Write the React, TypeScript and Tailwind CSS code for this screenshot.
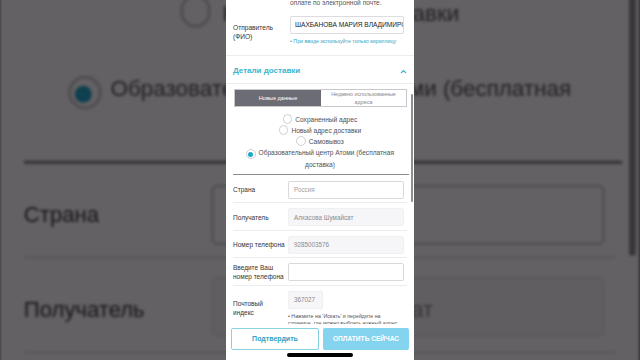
import React from 'react'

function Radio({ checked }: { checked?: boolean }) {
  return (
    <span className="mr-[3px] inline-flex h-[9.5px] w-[9.5px] items-center justify-center rounded-full border border-[#cfcfd3] bg-white align-[-2px]">
      {checked && <span className="h-[5px] w-[5px] rounded-full bg-[#1ea7c9]" />}
    </span>
  )
}

function Field({ label, value, muted }: { label: React.ReactNode; value?: string; muted?: boolean }) {
  return (
    <div className="mx-[7px] flex items-center border-b border-[#ececef] pt-[5px] pb-[3.5px] first:pt-[6px]">
      <div className="w-[55px] whitespace-nowrap text-[6.5px] leading-[9px] text-[#333]">{label}</div>
      <div
        className={
          muted
            ? 'flex h-[18px] w-[116px] items-center rounded-[2px] border border-[#f0f0f2] bg-[#f6f6f8] px-[5px] text-[6.3px] text-[#8a8a8e]'
            : 'flex h-[18px] w-[116px] items-center rounded-[2px] border border-[#d9d9dd] bg-white px-[5px] text-[6.3px] text-[#a0a0a4]'
        }
      >
        {value}
      </div>
    </div>
  )
}

function Screen() {
  return (
    <div className="relative w-[188px] bg-white text-[#333]">
      {/* ---------- cut-off paragraph ---------- */}
      <div className="h-[14px] pl-[64px] text-[6.6px] leading-[6px] text-[#555]">оплате по электронной почте.</div>

      {/* ---------- sender ---------- */}
      <div className="flex h-[41px]">
        <div className="w-[64px] pl-[7px] pt-[9px] text-[6.6px] leading-[9px]">
          Отправитель
          <br />
          (ФИО)
        </div>
        <div className="min-w-0 flex-1 pr-[10px]">
          <div className="mt-[2px] flex h-[18px] items-center overflow-hidden whitespace-nowrap rounded-[2px] border border-[#dcdce0] px-[4px] text-[6.6px] text-[#222]">
            ШАХБАНОВА МАРИЯ ВЛАДИМИРОВНА
          </div>
          <div className="mt-[4px] whitespace-nowrap text-[5.3px] leading-[7px] text-[#2aa7c7]">
            • При вводе используйте только кириллицу
          </div>
        </div>
      </div>

      {/* ---------- section header ---------- */}
      <div className="flex h-[29px] items-center justify-between border-y border-[#ececef] pl-[7px] pr-[7px] pt-[3px]">
        <span className="text-[8px] font-bold text-[#3db3cc]">Детали доставки</span>
        <svg width="7" height="5" viewBox="0 0 7 5" fill="none">
          <path d="M1 4 L3.5 1.5 L6 4" stroke="#3db3cc" strokeWidth="1.2" />
        </svg>
      </div>

      {/* ---------- tabs ---------- */}
      <div className="mt-[5px] ml-[8px] mr-[7px] flex h-[18px] border border-[#c8c8cc]">
        <div className="flex w-[86px] items-center justify-center bg-[#6c6c74] text-[5.6px] text-white">Новые данные</div>
        <div className="flex flex-1 items-center justify-center text-center text-[5.4px] leading-[8.5px] text-[#8a8a8e]">
          Недавно использованные
          <br />
          адреса
        </div>
      </div>

      {/* ---------- delivery type ---------- */}
      <div className="px-[6px] pt-[6.5px] pb-[4px] text-center text-[6.6px] leading-[11px] text-[#505054]">
        <div>
          <Radio />
          Сохраненный адрес
        </div>
        <div>
          <Radio />
          Новый адрес доставки
        </div>
        <div>
          <Radio />
          Самовывоз
        </div>
        <div>
          <Radio checked />
          Образовательный центр Атоми (бесплатная доставка)
        </div>
      </div>
      <div className="ml-[7px] mr-[5px] border-t border-[#8c8c90]" />

      {/* ---------- address fields ---------- */}
      <div>
        <Field label="Страна" value="Россия" />
        <Field label="Получатель" value="Алхасова Шумайсат" muted />
        <Field label="Номер телефона" value="9285003576" muted />
        <Field
          label={
            <>
              Введите Ваш
              <br />
              номер телефона
            </>
          }
        />
      </div>
      <div className="mx-[7px] flex items-start pt-[5px]">
        <div className="mt-[8.5px] w-[55px] text-[6.5px] leading-[9px]">
          Почтовый
          <br />
          индекс
        </div>
        <div className="flex-1">
          <div className="flex h-[18px] w-[35px] items-center rounded-[2px] border border-[#f0f0f2] bg-[#f6f6f8] px-[5px] text-[6.3px] text-[#8a8a8e]">
            367027
          </div>
          <div className="mt-[4px] whitespace-nowrap text-[5.3px] leading-[7px] text-[#555]">
            • Нажмите на 'Искать' и перейдите на
            <br />
            странице, где можно выбрать нужный адрес
          </div>
        </div>
      </div>
      <div className="h-[40px]" />

      {/* scroll indicator */}
      <div className="absolute right-[1.5px] top-[94px] h-[108px] w-[1.5px] rounded-full bg-[#8e8e93]" />
    </div>
  )
}

export default function App() {
  return (
    <div className="relative flex h-[360px] w-[640px] justify-center overflow-hidden bg-[#605e60] font-['Liberation_Sans',Arial,sans-serif]">
      {/* ---------- blurred enlarged copy behind ---------- */}
      <div className="absolute inset-0 overflow-hidden">
        <div className="w-[188px] origin-top-left -translate-y-[431px] scale-[3.4] blur-[0.5px]">
          <Screen />
        </div>
        <div className="absolute inset-0 bg-[#050005]/[0.62]" />
      </div>

      {/* ---------- phone ---------- */}
      <div className="relative flex h-[360px] w-[188px] flex-col overflow-hidden bg-white">
        <div className="min-h-0 flex-1 overflow-hidden">
          <Screen />
        </div>
        <div className="flex-none bg-white px-[5px] pt-[4px] shadow-[0_-1px_2px_rgba(0,0,0,0.06)]">
          <div className="flex gap-[4px]">
            <div className="flex h-[22px] flex-1 items-center justify-center rounded-[2px] border border-[#86d2e4] text-[7px] font-bold text-[#2fa4c2]">
              Подтвердить
            </div>
            <div className="flex h-[22px] flex-1 items-center justify-center rounded-[2px] bg-[#84d3ef] text-[6.6px] font-bold text-white">
              ОПЛАТИТЬ СЕЙЧАС
            </div>
          </div>
          <div className="mx-auto mt-[3px] mb-[3px] h-[4px] w-[66px] rounded-full bg-black" />
        </div>
      </div>
    </div>
  )
}
